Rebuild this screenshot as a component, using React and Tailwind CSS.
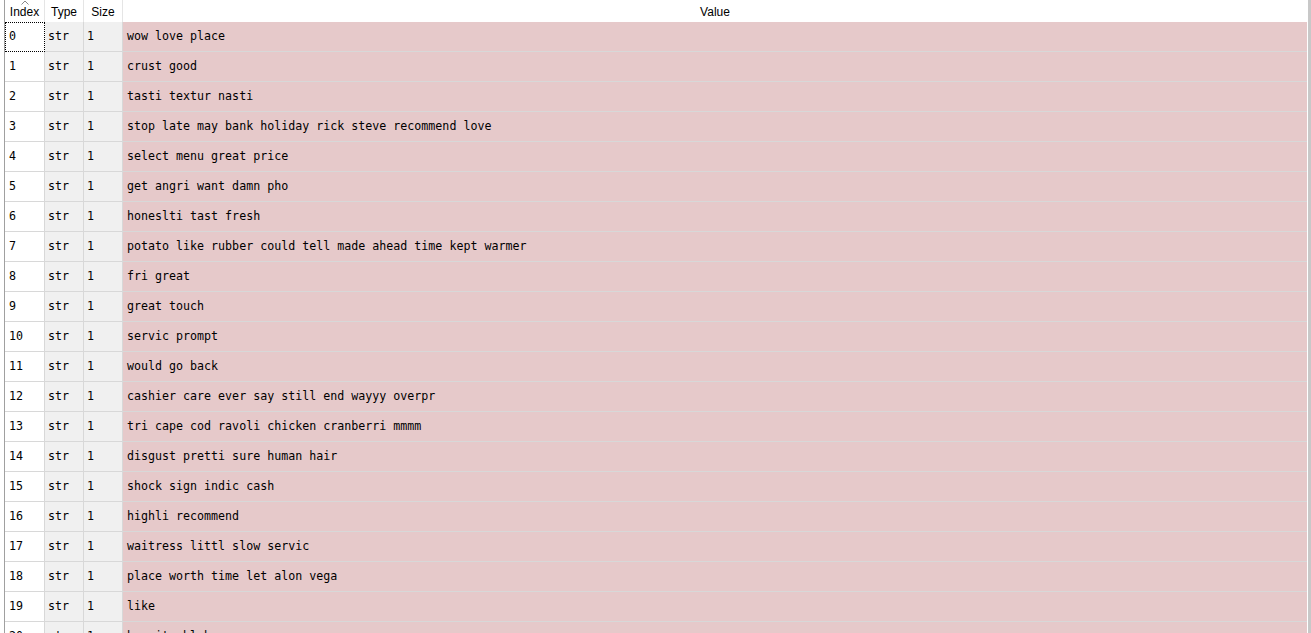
import React from "react";

const rows = [
  "wow love place",
  "crust good",
  "tasti textur nasti",
  "stop late may bank holiday rick steve recommend love",
  "select menu great price",
  "get angri want damn pho",
  "honeslti tast fresh",
  "potato like rubber could tell made ahead time kept warmer",
  "fri great",
  "great touch",
  "servic prompt",
  "would go back",
  "cashier care ever say still end wayyy overpr",
  "tri cape cod ravoli chicken cranberri mmmm",
  "disgust pretti sure human hair",
  "shock sign indic cash",
  "highli recommend",
  "waitress littl slow servic",
  "place worth time let alon vega",
  "like",
  "burrito blah",
  "food amaz",
];

const mono = { fontFamily: '"DejaVu Sans Mono", monospace' };

export default function App() {
  return (
    <div
      className="w-[1311px] h-[633px] overflow-hidden bg-white flex"
      style={{ fontFamily: '"Liberation Sans", Arial, sans-serif' }}
    >
      <div className="w-[5px] shrink-0 bg-white border-r border-[#a0a0a0]" />
      <div className="flex-1 flex flex-col min-w-0">
        <div className="h-[22px] shrink-0 flex text-[12px] text-black bg-white">
          <div className="relative w-[40px] shrink-0 border-r border-[#e5e5e5] flex items-center justify-center pt-[2px]">
            <svg
              className="absolute top-0 left-1/2 -translate-x-1/2"
              width="8"
              height="5"
              viewBox="0 0 8 5"
            >
              <path d="M0.5 4.5 L4 1 L7.5 4.5" fill="none" stroke="#888" strokeWidth="1" />
            </svg>
            Index
          </div>
          <div className="w-[39px] shrink-0 border-r border-[#e5e5e5] flex items-center justify-center pt-[2px]">Type</div>
          <div className="w-[39px] shrink-0 border-r border-[#e5e5e5] flex items-center justify-center pt-[2px]">Size</div>
          <div className="flex-1 flex items-center justify-center pt-[2px]">Value</div>
        </div>
        <div className="flex flex-col text-[11.65px] text-black" style={mono}>
          {rows.map((v, i) => (
            <div key={i} className="h-[30px] shrink-0 flex">
              <div
                className={
                  i === 0
                    ? "w-[40px] shrink-0 bg-white border border-dotted border-black flex items-center pl-[3px]"
                    : "w-[40px] shrink-0 bg-white border-r border-b border-[#d8d8d8] flex items-center pl-[4px]"
                }
              >
                {i}
              </div>
              <div className="w-[39px] shrink-0 bg-[#f0f0f0] border-r border-b border-[#d8d8d8] flex items-center pl-[3px]">
                str
              </div>
              <div className="w-[39px] shrink-0 bg-[#f0f0f0] border-r border-b border-[#d8d8d8] flex items-center pl-[3px]">
                1
              </div>
              <div className="flex-1 bg-[#e6c9ca] border-b border-[#d8d8d8] flex items-center pl-[4px] whitespace-pre">
                {v}
              </div>
            </div>
          ))}
        </div>
      </div>
      <div className="w-[1px] shrink-0 bg-white" />
      <div className="w-[3px] shrink-0 bg-[#c8c8c8]" />
    </div>
  );
}
